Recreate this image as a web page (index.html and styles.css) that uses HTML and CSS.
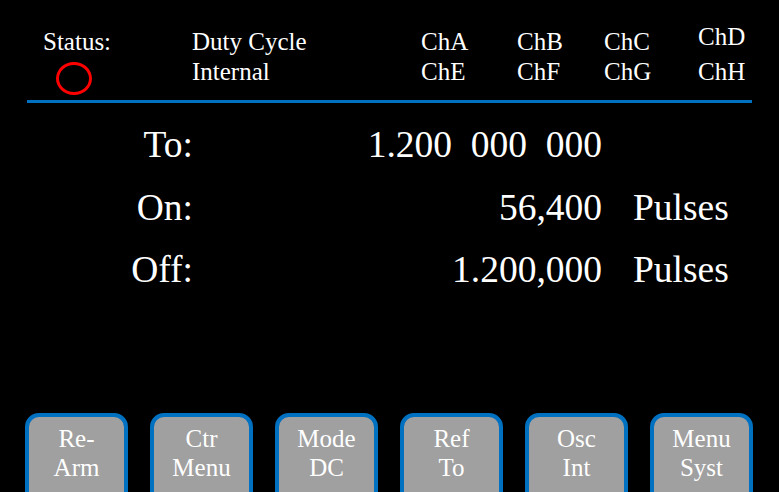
FILE: index.html
```html
<!DOCTYPE html>
<html>
<head>
<meta charset="utf-8">
<link rel="stylesheet" href="styles.css">
</head>
<body>
<div class="screen">
  <div class="header">
    <div class="cell">Status:</div>
    <div class="cell">Duty Cycle</div>
    <div class="cell">ChA</div>
    <div class="cell">ChB</div>
    <div class="cell">ChC</div>
    <div class="cell up">ChD</div>
    <div class="cell"><div class="status-ring"></div></div>
    <div class="cell">Internal</div>
    <div class="cell">ChE</div>
    <div class="cell">ChF</div>
    <div class="cell">ChG</div>
    <div class="cell">ChH</div>
  </div>
  <div class="rule"></div>
  <div class="readout">
    <div class="label">To:</div>
    <div class="value">1.200  000  000</div>
    <div class="unit"></div>
    <div class="label">On:</div>
    <div class="value">56,400</div>
    <div class="unit">Pulses</div>
    <div class="label">Off:</div>
    <div class="value">1.200,000</div>
    <div class="unit">Pulses</div>
  </div>
  <div class="buttons">
    <div class="btn">Re-<br>Arm</div>
    <div class="btn">Ctr<br>Menu</div>
    <div class="btn">Mode<br>DC</div>
    <div class="btn">Ref<br>To</div>
    <div class="btn">Osc<br>Int</div>
    <div class="btn">Menu<br>Syst</div>
  </div>
</div>
</body>
</html>
```
FILE: styles.css
```css
html, body {
  margin: 0;
  padding: 0;
  background: #000;
}
body {
  width: 779px;
  height: 492px;
  overflow: hidden;
  font-family: "Liberation Serif", "Times New Roman", serif;
  color: #fff;
}
.screen {
  width: 779px;
  height: 492px;
  overflow: hidden;
}
.header {
  display: grid;
  grid-template-columns: 149px 229px 96px 87px 94px auto;
  grid-auto-rows: 30px;
  padding: 27px 0 0 43px;
  font-size: 25px;
  line-height: 30px;
}
.cell {
  white-space: nowrap;
}
.up {
  margin-top: -5px;
}
.status-ring {
  box-sizing: border-box;
  width: 36px;
  height: 33px;
  margin: 5px 0 0 13px;
  border: 3.5px solid #ff0000;
  border-radius: 50%;
}
.rule {
  margin: 13px 27px 0 27px;
  height: 3px;
  background: #0070c0;
}
.readout {
  display: grid;
  grid-template-columns: 193px 409px auto;
  margin-top: 11px;
  font-size: 37.5px;
  line-height: 62.5px;
}
.label {
  text-align: right;
}
.value {
  text-align: right;
  white-space: pre;
}
.unit {
  padding-left: 31px;
}
.buttons {
  display: flex;
  gap: 22px;
  margin-top: 111px;
  padding-left: 25px;
}
.btn {
  box-sizing: border-box;
  width: 103px;
  height: 100px;
  flex: none;
  background: #a0a0a0;
  border: 4px solid #0070c0;
  border-radius: 14px;
  padding-top: 7px;
  text-align: center;
  font-size: 25px;
  line-height: 29px;
}
```
